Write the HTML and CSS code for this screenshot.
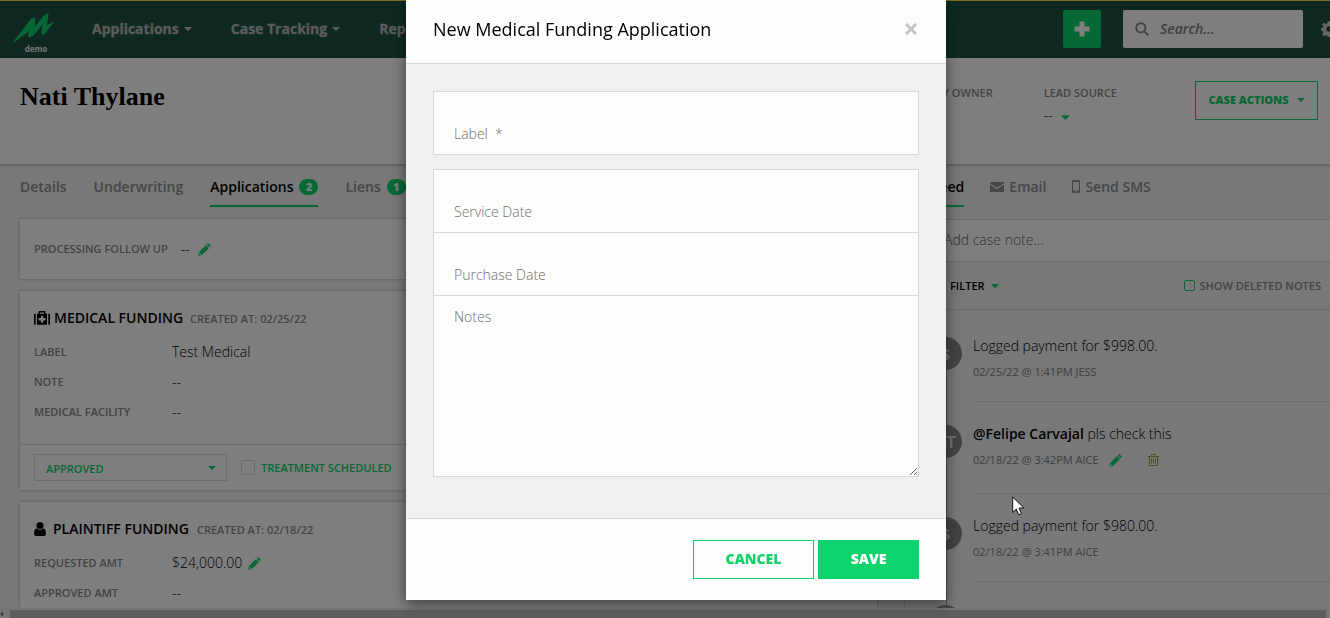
FILE: index.html
```html
<!DOCTYPE html>
<html lang="en">
<head>
<meta charset="utf-8">
<title>Nati Thylane</title>
<link rel="stylesheet" href="styles.css">
</head>
<body>
<svg class="sprite" aria-hidden="true">
  <symbol id="pencil" viewBox="0 0 13 13"><path d="M0 13l1-4 7-7 3 3-7 7zM8.700 1.300L9.700.3Q10.300 0 10.800.4L12.600 2.200Q13 2.700 12.600 3.300L11.700 4.300z"/><path d="M1.500 10l1.600 1.600-1.400.4-.6-.6z" fill="#fdfdfb"/></symbol>
  <symbol id="caret" viewBox="0 0 8 4"><path d="M0 0h8L4.500 3.700h-1z"/></symbol>
</svg>
<div class="app">
  <header class="topbar">
    <a class="logo" href="#">
      <svg width="42" height="31" viewBox="0 0 42 31"><path d="M0 30.500L19 6l3-1.200 1.500.5L22.500 14 32 2.500 36 0l.5 1-1.500 11 7-3.500-9.500 13-2.500.3-.8-1.300L31 11 21.500 22.500l-4 1.500-1.300-.8.8-5z"/></svg>
      <span>demo</span>
    </a>
    <nav class="menu">
      <a href="#">Applications <svg class="caret"><use href="#caret"/></svg></a>
      <a href="#">Case Tracking <svg class="caret"><use href="#caret"/></svg></a>
      <a href="#">Reporting <svg class="caret"><use href="#caret"/></svg></a>
    </nav>
    <button class="add" aria-label="Add"><svg width="16" height="16" viewBox="0 0 16 16"><path d="M6 .5h4a.5.5 0 0 1 .5.5v4.500H15a.5.5 0 0 1 .5.5v4a.5.5 0 0 1-.5.5h-4.500V15a.5.5 0 0 1-.5.5H6a.5.5 0 0 1-.5-.5v-4.500H1a.5.5 0 0 1-.5-.5V6a.5.5 0 0 1 .5-.5h4.500V1A.5.5 0 0 1 6 .5z"/></svg></button>
    <div class="search">
      <svg width="14" height="14" viewBox="0 0 14 14"><circle cx="5.800" cy="5.800" r="4.600"/><path d="M9.200 9.200l3.600 3.600"/></svg>
      <input type="search" placeholder="Search..." aria-label="Search">
    </div>
    <a class="gear" href="#" aria-label="Settings"><svg width="16" height="16" viewBox="-8 -8 16 16"><path fill-rule="evenodd" d="M-1.300-7.800h2.600l.5 2.200 1.200.5 2-1.200 1.800 1.800-1.200 2 .5 1.200 2.200.5v2.600l-2.200.5-.5 1.200 1.200 2-1.800 1.800-2-1.200-1.200.5-.5 1.400h-2.600l-.5-1.400-1.200-.5-2 1.200-1.800-1.800 1.200-2-.5-1.200-2.200-.5v-2.600l2.200-.5.5-1.200-1.200-2 1.800-1.800 2 1.200 1.200-.5zM0-2.700a2.700 2.700 0 1 0 0 5.400 2.700 2.700 0 0 0 0-5.400z"/></svg></a>
  </header>

  <section class="casebar">
    <h1>Nati Thylane</h1>
    <dl class="facts">
      <div><dt>PRIMARY OWNER</dt><dd>--</dd></div>
      <div><dt>LEAD SOURCE</dt><dd>-- <svg class="caret wide"><use href="#caret"/></svg></dd></div>
    </dl>
    <button class="actions">CASE ACTIONS <svg class="caret"><use href="#caret"/></svg></button>
  </section>

  <div class="columns">
    <main class="left">
      <nav class="tabs">
        <a href="#">Details</a>
        <a href="#">Underwriting</a>
        <a href="#" class="on">Applications <b>2</b></a>
        <a href="#">Liens <b>1</b></a>
      </nav>
      <section class="card follow">
        <span class="key">PROCESSING FOLLOW UP</span><span>--</span>
        <svg class="pencil"><use href="#pencil"/></svg>
      </section>
      <section class="card">
        <h2>
          <svg width="16" height="15" viewBox="0 0 16 15"><path fill-rule="evenodd" d="M0 3.500Q0 3 1 2.800h.7v11H1Q0 13.700 0 13zM3 2.800h1.500V1Q4.500 0 5.500 0h5q1 0 1 1v1.800H13v11H3zM6 1.400v1.400h4V1.400zM14.300 2.800h.7q1 .2 1 .9V13q0 .7-1 .8h-.7zM6.900 4.800v2.300H4.600v2.300h2.300v2.300h2.300V9.400h2.300V7.100H9.200V4.800z"/></svg>
          MEDICAL FUNDING <small>CREATED AT: 02/25/22</small>
        </h2>
        <dl class="rows">
          <dt>LABEL</dt><dd>Test Medical</dd>
          <dt>NOTE</dt><dd>--</dd>
          <dt>MEDICAL FACILITY</dt><dd>--</dd>
        </dl>
        <div class="status">
          <div class="pick"><select aria-label="Status"><option>APPROVED</option></select><svg class="caret"><use href="#caret"/></svg></div>
          <label><input type="checkbox">TREATMENT SCHEDULED</label>
        </div>
      </section>
      <section class="card">
        <h2 class="person">
          <svg width="12" height="14" viewBox="0 0 12 14"><circle cx="6" cy="3.600" r="3.500"/><path d="M2.600 6.200Q6 9.400 9.400 6.200 12 7 12 11.500 12 14 10 14H2Q0 14 0 11.500 0 7 2.600 6.200z"/></svg>
          PLAINTIFF FUNDING <small>CREATED AT: 02/18/22</small>
        </h2>
        <dl class="rows">
          <dt>REQUESTED AMT</dt><dd>$24,000.00 <svg class="pencil"><use href="#pencil"/></svg></dd>
          <dt>APPROVED AMT</dt><dd>--</dd>
        </dl>
      </section>
    </main>

    <aside class="right">
      <nav class="tabs">
        <a href="#" class="on">Feed</a>
        <a href="#"><svg width="14" height="10" viewBox="0 0 14 10"><path d="M0 0h14v1.200L7 5.800 0 1.200zM0 2.600l7 4.600 7-4.600V10H0z"/></svg>Email</a>
        <a href="#"><svg width="8" height="13" viewBox="0 0 8 13"><path fill-rule="evenodd" d="M1 0h6q1 0 1 1v11q0 1-1 1H1q-1 0-1-1V1q0-1 1-1zm0 2v8.500h6V2zM3.200 11.200v1h1.600v-1z"/></svg>Send SMS</a>
      </nav>
      <input class="note" type="text" placeholder="Add case note..." aria-label="Case note">
      <div class="filter">
        <button>FILTER <svg class="caret"><use href="#caret"/></svg></button>
        <label><input type="checkbox">SHOW DELETED NOTES</label>
      </div>
      <ol class="feed">
        <li><i>$</i><div><p>Logged payment for $998.00.</p><small>02/25/22 @ 1:41PM JESS</small></div></li>
        <li class="own"><i>AT</i><div><p><strong>@Felipe Carvajal</strong> pls check this</p><small>02/18/22 @ 3:42PM AICE
          <svg class="pencil"><use href="#pencil"/></svg>
          <svg class="trash" width="11" height="12" viewBox="0 0 11 12"><path d="M0 2.500h11M3.500 2.500v-2h4v2M1.500 2.500v9h8v-9M3.500 4.500v5M5.500 4.500v5M7.500 4.500v5"/></svg></small></div></li>
        <li><i>$</i><div><p>Logged payment for $980.00.</p><small>02/18/22 @ 3:41PM AICE</small></div></li>
        <li><i></i><div></div></li>
      </ol>
    </aside>
  </div>
  <div class="scroll"><svg width="3" height="6" viewBox="0 0 3 6"><path d="M3 0v6L0 3z"/></svg><div></div></div>
</div>

<div class="backdrop">
  <form class="modal" role="dialog" aria-labelledby="modal-title">
    <header>
      <h2 id="modal-title">New Medical Funding Application</h2>
      <button type="button" aria-label="Close"><svg width="12" height="12" viewBox="0 0 12 12"><path d="M1 1l10 10M11 1L1 11"/></svg></button>
    </header>
    <div class="body">
      <div class="group">
        <div class="field"><label for="f-label">Label &nbsp;*</label><input id="f-label" type="text"></div>
      </div>
      <div class="group">
        <div class="field"><label for="f-service">Service Date</label><input id="f-service" type="text"></div>
        <div class="field"><label for="f-purchase">Purchase Date</label><input id="f-purchase" type="text"></div>
        <div class="field notes"><label for="f-notes">Notes</label><textarea id="f-notes"></textarea></div>
      </div>
    </div>
    <footer>
      <button type="button" class="cancel">CANCEL</button>
      <button type="button" class="save">SAVE</button>
    </footer>
  </form>
</div>
<svg class="pointer" width="13" height="20" viewBox="0 0 13 20"><path d="M.7 1v15.500L4.300 13l2.500 5.800 2.600-1.100L7 12h4.800z"/></svg>
</body>
</html>
```
FILE: styles.css
```css
* { box-sizing: border-box; }
body { margin: 0; overflow: hidden; font: 300 14px/20px "Open Sans", sans-serif; color: #000; }
h1, h2, p, dl, dd, ol { margin: 0; padding: 0; }
a { color: inherit; text-decoration: none; }
button, input, select, textarea { font: inherit; margin: 0; border: 0; background: none; border-radius: 0; outline: 0; }
button { padding: 0; }
.sprite { position: absolute; width: 0; height: 0; }
.caret { width: 8px; height: 4px; fill: currentColor; flex: none; }
.caret.wide { width: 9px; height: 5px; margin-left: 5px; }
.pencil { width: 13px; height: 13px; fill: #0dd36b; flex: none; }

.app { display: flex; flex-direction: column; height: 100vh; overflow: hidden; background: #f0f0f0; }

.topbar { display: flex; align-items: center; flex: none; height: 58px; padding-left: 12px; border-top: 1px solid #ffd54a; background: #1e5244; overflow: hidden; }
.logo { display: flex; flex-direction: column; align-items: center; flex: none; width: 42px; padding-top: 6px; color: #e8e8e8; font-size: 8px; font-weight: 700; line-height: 9px; }
.logo svg { fill: #0dd36b; }
.logo span { padding-left: 6px; }
.menu { display: flex; flex: 1; gap: 39px; margin-left: 38px; padding-bottom: 2px; color: #b8b8b8; font-weight: 700; -webkit-text-stroke: 0.3px #b8b8b8; }
.menu a { display: flex; align-items: center; gap: 5px; }
.add { display: grid; place-items: center; flex: none; width: 38px; height: 38px; border-radius: 2px; background: #0dd36b; }
.add svg { fill: #fff; }
.topbar .add, .topbar .search { margin-bottom: 2px; }
.search { display: flex; align-items: center; flex: none; width: 180px; height: 38px; margin: 0 18px 0 22px; padding-left: 12px; gap: 9px; border-radius: 2px; background: #fdfdfd; }
.search svg { flex: none; fill: none; stroke: #888; stroke-width: 2; stroke-linecap: round; }
.search input { width: 100%; min-width: 0; font-style: italic; font-weight: 600; }
.search input::placeholder { color: #808080; }
.gear { flex: none; width: 9px; height: 16px; margin-bottom: 2px; }
.gear svg { display: block; fill: #ccc; }

.casebar { display: flex; flex: none; position: relative; height: 106px; padding: 23px 12px 0 20px; background: #fdfdfd; box-shadow: 0 1px 3px rgba(0,0,0,.3); }
h1 { flex: 1; font: 700 26px/31px "Liberation Serif", serif; }
.facts { display: flex; gap: 51px; margin-right: 78px; }
.facts dt, .key, .rows dt { color: #888; font-size: 11px; font-weight: 600; }
.facts dt { line-height: 24px; }
.facts dd svg { fill: #0dd36b; }
.actions { display: flex; align-items: center; justify-content: center; gap: 8px; flex: none; width: 123px; height: 39px; padding-bottom: 2px; border: 1px solid #0dd36b; color: #0dd36b; font-size: 11px; font-weight: 800; }

.columns { display: flex; flex: 1; min-height: 0; overflow: hidden; }
.left { flex: 1; padding: 0 27px 0 20px; }
.tabs { display: flex; gap: 27px; height: 55px; color: #8c8c8c; font-weight: 600; }
.tabs a { display: flex; align-items: center; height: 43px; gap: 6px; padding-top: 4px; border-bottom: 2px solid transparent; }
.tabs a.on { color: #000; border-color: #0dd36b; }
.tabs b { width: 19px; height: 16px; border-radius: 8px; background: #0dd36b; color: #fdfdfd; font-size: 11px; line-height: 16px; text-align: center; }
.card { margin-bottom: 12px; background: #fdfdfd; box-shadow: 0 0 3px rgba(0,0,0,.25); }
.follow { display: flex; align-items: center; height: 60px; padding-left: 14px; gap: 13px; }
.follow .pencil { margin-left: -5px; }
.card h2 { display: flex; align-items: center; gap: 4px; padding: 16px 14px 8px; font-size: 14px; font-weight: 600; line-height: 20px; }
.card h2.person { gap: 7px; }
.card h2 small { margin-left: 3px; padding-top: 2px; color: #888; font-size: 11px; font-weight: 600; }
.card h2.person small { margin-left: 1px; }
.rows { display: grid; grid-template-columns: 138px 1fr; align-items: center; grid-auto-rows: 30px; padding: 0 14px; }
.rows dd { display: flex; align-items: center; gap: 6px; }
.status { display: flex; align-items: center; gap: 14px; height: 46px; margin-top: 17px; padding: 0 14px; border-top: 1px solid #d2dcd9; color: #0dd36b; font-size: 11px; font-weight: 600; }
.pick { display: flex; align-items: center; width: 193px; height: 27px; padding-right: 10px; border: 1px solid #d2dcd9; }
.pick select { flex: 1; appearance: none; padding: 2px 0 0 11px; color: inherit; }
.status label, .filter label { display: flex; align-items: center; }
.status input { appearance: none; width: 14px; height: 15px; margin-right: 6px; border: 1px solid #d2dcd9; }

.right { display: flex; flex-direction: column; flex: none; width: 426px; border-left: 1px solid #d2d6d5; }
.right .tabs { flex: none; gap: 26px; height: 56px; padding-left: 27px; border-bottom: 1px solid #d2d6d5; }
.right .tabs a { gap: 5px; }
.right .tabs svg { fill: #8c8c8c; }
.note { flex: none; height: 42px; padding: 0 0 2px 39px; border-bottom: 1px solid #d2d6d5; background: #fdfdfd; }
.note::placeholder { color: #606060; }
.filter { display: flex; align-items: center; justify-content: space-between; flex: none; height: 48px; padding: 0 9px 0 45px; border-bottom: 1px solid #d2d6d5; font-size: 11px; font-weight: 600; }
.filter button { display: flex; align-items: center; gap: 6px; }
.filter svg { fill: #0dd36b; }
.filter label { color: #888; }
.filter input { appearance: none; width: 11px; height: 11px; margin-right: 5px; border: 1px solid #0dd36b; border-radius: 2px; }
.feed { flex: 1; margin-top: 4px; list-style: none; background: linear-gradient(#999, #999) 41px 40px / 1px 100% no-repeat; }
.feed li { display: flex; gap: 11px; height: 88px; padding-left: 24px; }
.feed li.own { height: 92px; }
.feed i { display: grid; place-items: center; flex: none; width: 33px; height: 33px; margin-top: 23px; border-radius: 50%; background: #888; color: #e0e0e0; font-size: 16px; font-style: normal; font-weight: 700; }
.feed div { flex: 1; padding-top: 22px; border-bottom: 1px solid #d2dcd9; }
.feed strong { font-weight: 600; }
.feed small { display: flex; align-items: center; margin-top: 6px; color: #808080; font-size: 11px; font-weight: 500; }
.feed small .pencil { margin-left: 10px; }
.trash { margin-left: 26px; fill: none; stroke: #8fae48; }

.scroll { display: flex; align-items: center; gap: 7px; flex: none; height: 10px; padding: 2px 4px 0 0; background: #eee; }
.scroll svg { flex: none; fill: #777; }
.scroll div { flex: 1; height: 8px; background: #bebebe; }

.backdrop { position: fixed; inset: 0; display: flex; justify-content: center; align-items: flex-start; padding-left: 22px; background: rgba(0,0,0,.5); }
.modal { width: 540px; background: #fdfdfb; box-shadow: 0 4px 14px rgba(0,0,0,.5); }
.modal header { display: flex; align-items: center; justify-content: space-between; height: 64px; padding: 0 29px 5px 27px; border-bottom: 1px solid #d2dcd9; }
.modal h2 { font-size: 18px; font-weight: 400; line-height: 24px; }
.modal header svg { display: block; stroke: #c4c4c4; stroke-width: 3; }
.body { display: flex; flex-direction: column; gap: 14px; padding: 27px 27px 41px; background: #f0f0f0; }
.group { border: 1px solid #d2dcd9; background: #fdfdfb; }
.field { display: grid; color: #707070; }
.field + .field { border-top: 1px solid #d2dcd9; }
.field label { grid-area: 1 / 1; align-self: end; padding: 0 20px 10px; pointer-events: none; }
.field input { grid-area: 1 / 1; width: 100%; height: 62px; padding: 20px; }
.notes label { align-self: start; padding: 11px 20px; color: #60766e; }
.notes textarea { grid-area: 1 / 1; display: block; width: 100%; height: 180px; padding: 11px 20px; resize: vertical; }
.modal footer { display: flex; justify-content: flex-end; gap: 4px; padding: 21px 27px; border-top: 1px solid #d2dcd9; }
.modal footer button { height: 39px; padding-bottom: 2px; border: 1px solid #0dd36b; font-weight: 800; }
.cancel { width: 121px; color: #0dd36b; }
.save { width: 101px; color: #fff; background: #0dd36b; }
.pointer { position: fixed; left: 1012px; top: 496px; fill: #fff; stroke: #111; }
```
